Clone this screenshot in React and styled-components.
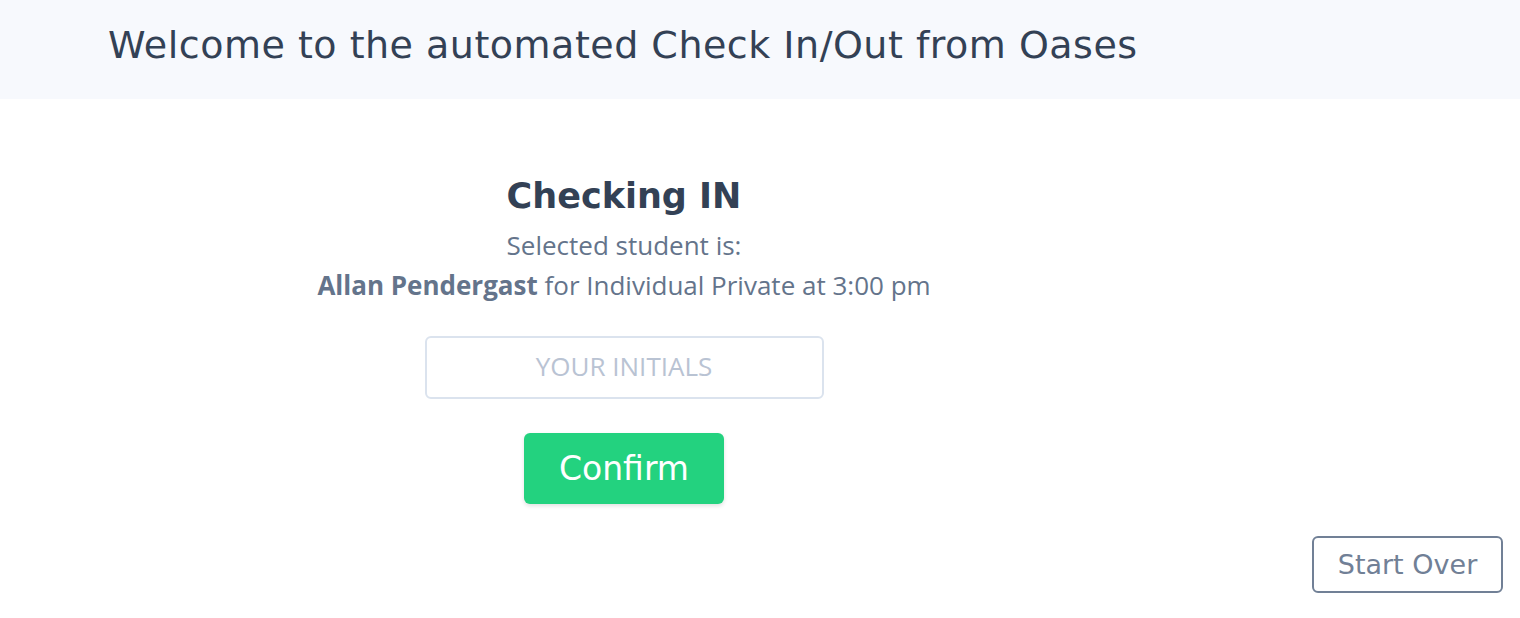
import React from "react";
import styled, { createGlobalStyle } from "styled-components";

const GlobalStyle = createGlobalStyle`
  html, body { margin: 0; padding: 0; background: #ffffff; }
  body { font-family: "Open Sans", "Liberation Sans", sans-serif; }
  * { box-sizing: border-box; }
`;

const heading = `"DejaVu Sans", "Inter", sans-serif`;

const Page = styled.div`
  width: 1520px;
  min-height: 618px;
  display: flex;
  flex-direction: column;
`;

const Header = styled.header`
  height: 99px;
  background: #f7f9fd;
  display: flex;
  align-items: center;
  padding: 0 0 9px 108px;
`;

const Title = styled.h1`
  margin: 0;
  font-family: ${heading};
  font-weight: 400;
  font-size: 38px;
  letter-spacing: 0.5px;
  color: #334155;
`;

const Main = styled.main`
  width: 1248px;
  display: flex;
  flex-direction: column;
  align-items: center;
  padding-top: 76px;
`;

const SubTitle = styled.h2`
  margin: 0 0 8px;
  font-family: ${heading};
  font-weight: 700;
  font-size: 35px;
  line-height: 42px;
  color: #334155;
`;

const Line = styled.p`
  margin: 0;
  font-size: 26px;
  line-height: 40px;
  color: #64748b;
  text-align: center;
`;

const Strong = styled.strong`
  font-weight: 700;
`;

const Input = styled.input`
  margin-top: 31px;
  width: 399px;
  height: 63px;
  padding: 0 12px 3px;
  border: 2px solid #dbe3ee;
  border-radius: 6px;
  font-family: "Open Sans", sans-serif;
  font-size: 26px;
  text-align: center;
  color: #334155;
  outline: none;
  &::placeholder { color: #b9c3d3; }
`;

const PrimaryButton = styled.button`
  margin-top: 34px;
  width: 200px;
  height: 71px;
  border: none;
  border-radius: 6px;
  background: #23d27f;
  color: #ffffff;
  font-family: ${heading};
  font-size: 33px;
  font-weight: 400;
  box-shadow: 0 2px 4px rgba(0,0,0,0.12);
  cursor: pointer;
`;

const Footer = styled.div`
  display: flex;
  justify-content: flex-end;
  padding: 32px 17px 0 0;
`;

const OutlineButton = styled.button`
  width: 191px;
  height: 57px;
  background: #ffffff;
  border: 2px solid #718096;
  border-radius: 6px;
  color: #718096;
  font-family: ${heading};
  font-size: 27px;
  font-weight: 400;
  cursor: pointer;
`;

export default function App() {
  return (
    <>
      <GlobalStyle />
      <Page>
        <Header>
          <Title>Welcome to the automated Check In/Out from Oases</Title>
        </Header>
        <Main>
          <SubTitle>Checking IN</SubTitle>
          <Line>Selected student is:</Line>
          <Line>
            <Strong>Allan Pendergast</Strong> for Individual Private at 3:00 pm
          </Line>
          <Input placeholder="YOUR INITIALS" />
          <PrimaryButton>Confirm</PrimaryButton>
        </Main>
        <Footer>
          <OutlineButton>Start Over</OutlineButton>
        </Footer>
      </Page>
    </>
  );
}
